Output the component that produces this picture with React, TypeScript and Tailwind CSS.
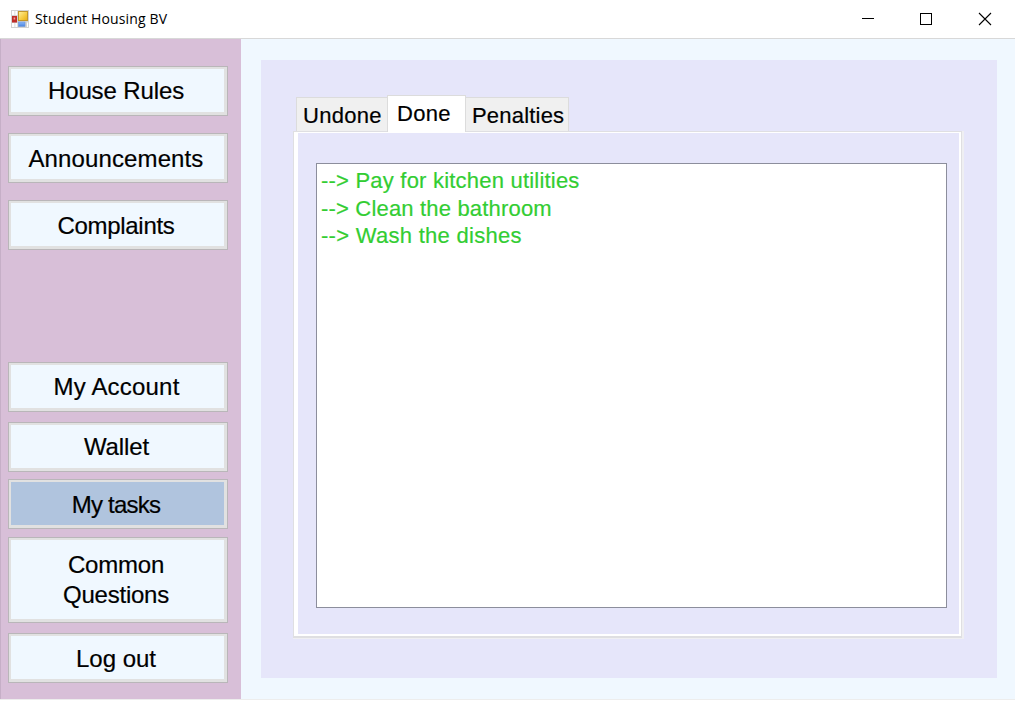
type NavItem = { label: string; box: string; text: string; active?: boolean };

const nav: NavItem[] = [
  { label: "House Rules", box: "h-[50px]", text: "tracking-[-0.12px]" },
  { label: "Announcements", box: "mt-[17px] h-[50px]", text: "tracking-[0.12px] pt-[2px]" },
  { label: "Complaints", box: "mt-[17px] h-[50px]", text: "tracking-[-0.3px] pt-[2px]" },
  { label: "My Account", box: "mt-[112px] h-[50px]", text: "tracking-[0.2px] pl-[1px]" },
  { label: "Wallet", box: "mt-[10px] h-[50px]", text: "tracking-[-0.1px] pl-[1px]" },
  { label: "My tasks", box: "mt-[7px] h-[50px]", text: "tracking-[-0.75px] pt-[2px]", active: true },
  { label: "Common\nQuestions", box: "mt-[8px] h-[86px]", text: "tracking-[-0.22px]" },
  { label: "Log out", box: "mt-[10px] h-[50px]", text: "pt-[2px]" },
];

const tasks = [
  { text: "Pay for kitchen utilities", track: "tracking-[0.21px]" },
  { text: "Clean the bathroom", track: "tracking-[0.18px]" },
  { text: "Wash the dishes", track: "tracking-[0.28px]" },
];

function AppIcon() {
  return (
    <svg width="18" height="18" viewBox="0 0 18 18" className="ml-[11px] shrink-0">
      <defs>
        <linearGradient id="gold" x1="0" y1="0" x2="1" y2="1">
          <stop offset="0" stopColor="#fff0a0" />
          <stop offset="0.6" stopColor="#f5c93c" />
          <stop offset="1" stopColor="#e6ac14" />
        </linearGradient>
        <linearGradient id="blue" x1="0" y1="0" x2="0" y2="1">
          <stop offset="0" stopColor="#8bb8fa" />
          <stop offset="1" stopColor="#4a84e0" />
        </linearGradient>
      </defs>
      <rect width="18" height="18" fill="#d2d2d2" />
      <path d="M1 1h2.5v4H1zM4.3 1h2v4h-2zM1 13h2.5v4H1zM4.3 13h2v4h-2zM16 12.5h1v4.5h-1z" fill="#fff" />
      <rect x="1" y="6" width="5" height="6.5" fill="#c02c28" />
      <rect x="2.6" y="7.5" width="1.6" height="2" fill="#f0a49a" />
      <rect x="7.5" y="1.5" width="9" height="9" fill="url(#gold)" stroke="#c2962a" />
      <rect x="7.5" y="12" width="6.5" height="4.4" fill="url(#blue)" stroke="#6b94da" strokeWidth="0.6" />
    </svg>
  );
}

function TitleBar() {
  return (
    <header className="flex h-[39px] shrink-0 items-center border-b border-[#d8d8d8] bg-white">
      <AppIcon />
      <span className="ml-[6px] grow whitespace-nowrap font-['Open_Sans','Noto_Sans',sans-serif] text-[14px] leading-5 tracking-[0.14px] text-black [-webkit-text-stroke:0px]">
        Student Housing BV
      </span>
      <svg width="130" height="14" viewBox="0 0 130 14" className="mr-[23px] shrink-0" fill="none" stroke="#000" shapeRendering="crispEdges">
        <path d="M0 6.5h12M58.5 1.5h11v11h-11z" />
        <path d="M117 1l12 12M129 1l-12 12" strokeWidth="1.1" shapeRendering="auto" />
      </svg>
    </header>
  );
}

function NavButton({ item }: { item: NavItem }) {
  return (
    <button className={`block w-[220px] shrink-0 border border-[#b9b6b9] ${item.box}`}>
      <span
        className={`flex h-full items-center justify-center whitespace-pre border-t-2 border-r-[3px] border-b-[3px] border-l-2 border-[#e1e1e1] pr-[3px] text-center text-[24px] leading-[30px] ${item.text} ${
          item.active ? "bg-[#b0c4de]" : "bg-[#f0f8ff]"
        }`}
      >
        {item.label}
      </span>
    </button>
  );
}

function Tabs() {
  return (
    <div className="ml-[35px] flex h-[36px] items-end text-[22px] leading-[26px]">
      <div className="flex h-[34px] w-[92px] items-center border-t border-l border-[#dcdcdc] bg-[#f0f0f0] pl-[6px] pt-[3px] tracking-[0.3px]">Undone</div>
      <div className="relative z-10 -mb-px -ml-px flex h-[37px] w-[79px] items-center border-x border-t border-[#dcdcdc] bg-white pb-[1px] pl-[9px] tracking-[0.3px]">Done</div>
      <div className="flex h-[34px] w-[103px] items-center border-t border-r border-[#dcdcdc] bg-[#f0f0f0] pl-[6px] pt-[3px] tracking-[0.2px]">Penalties</div>
    </div>
  );
}

export default function App() {
  return (
    <div className="flex h-[701px] w-[1015px] flex-col overflow-hidden bg-[#f0f8ff] font-['Liberation_Sans',Arial,sans-serif] text-black [-webkit-text-stroke:0.2px]">
      <TitleBar />
      <div className="flex h-[660px]">
        <aside className="flex w-[241px] shrink-0 flex-col border-l border-[#c6afc7] bg-[#d8bfd8] pt-[27px] pl-[7px]">
          {nav.map((item) => (
            <NavButton key={item.label} item={item} />
          ))}
        </aside>
        <main className="ml-[20px] mt-[21px] h-[618px] w-[736px] bg-[#e6e6fa] pt-[35px]">
          <Tabs />
          <div className="ml-[32px] h-[508px] w-[671px] border-r-2 border-b border-[#efeff2]">
            <div className="h-full border border-b-2 border-[#dfdfe2] bg-white pt-px pr-[2px] pb-[2px] pl-[4px]">
              <div className="h-full bg-[#e6e6fa] pt-[30px] pl-[18px]">
                <div className="h-[445px] w-[631px] border border-[#8c8e9c] bg-white pt-[3px] pl-[4px] text-[22px] leading-[27.5px] text-[#32cd32]">
                  {tasks.map((task) => (
                    <div key={task.text} className={`whitespace-nowrap ${task.track}`}>
                      {"--> "}
                      {task.text}
                    </div>
                  ))}
                </div>
              </div>
            </div>
          </div>
        </main>
      </div>
      <div className="h-px bg-[#ededed]" />
      <div className="h-px bg-white" />
    </div>
  );
}
